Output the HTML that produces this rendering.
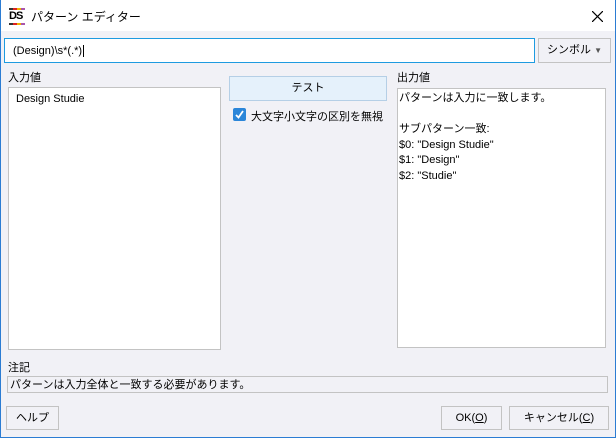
<!DOCTYPE html>
<html><head><meta charset="utf-8"><style>
*{box-sizing:border-box;margin:0;padding:0}
body{width:616px;height:438px;overflow:hidden;background:#f1f1f6;font-family:"Liberation Sans","Noto Sans CJK JP",sans-serif;font-size:11px;color:#000;position:relative}
.a{position:absolute}
.frame{left:0;top:0;width:616px;height:438px;border:1px solid #2b7cd3;border-top:none}
.title{left:0;top:0;width:616px;height:31px;background:#fff}
.box{background:#fff;border:1px solid #c3c3c3}
.btn{background:#f1f1f6;border:1px solid #c3c3c3;text-align:center;line-height:22px}
.stripe{height:2px;width:16px;background:linear-gradient(90deg,#333 0 25%,#d22 25% 50%,#f0b000 50% 75%,#a5a 75%)}
</style></head><body>
<div class="a title"></div>
<div class="a" style="left:9px;top:8px;width:16px">
<div class="stripe"></div>
<div style="font-weight:bold;font-size:11px;line-height:11px;letter-spacing:-1px;margin:1px 0">DS</div>
<div class="stripe"></div></div>
<div class="a" style="left:31px;top:8px;font-size:12px">パターン エディター</div>
<svg class="a" style="left:592px;top:11px" width="11" height="11"><path d="M0 0L11 11M11 0L0 11" stroke="#000" stroke-width="1.2"/></svg>
<div class="a box" style="left:4px;top:38px;width:531px;height:25px;border-color:#1e9be0;padding:6px 8px;font-size:11px">(Design)\s*(.*)<span style="border-left:1px solid #000;margin-left:1px"></span></div>
<div class="a btn" style="left:538px;top:38px;width:73px;height:25px">シンボル <span style="font-size:8px;color:#555">▼</span></div>
<div class="a" style="left:8px;top:69px">入力値</div>
<div class="a box" style="left:8px;top:87px;width:213px;height:263px;padding:5px 7px">Design Studie</div>
<div class="a btn" style="left:229px;top:76px;width:158px;height:25px;background:#e5f1fb;border-color:#b5cfe6">テスト</div>
<div class="a" style="left:233px;top:108px;width:13px;height:13px;background:#2b86d9;border-radius:2px"><svg width="13" height="13"><path d="M3 7L5.5 9.5L10 3" stroke="#fff" stroke-width="1.8" fill="none"/></svg></div>
<div class="a" style="left:251px;top:108px">大文字小文字の区別を無視</div>
<div class="a" style="left:397px;top:69px">出力値</div>
<div class="a box" style="left:397px;top:88px;width:209px;height:260px;padding:2px 1px;line-height:15.5px">パターンは入力に一致します。<br><br>サブパターン一致:<br>$0: "Design Studie"<br>$1: "Design"<br>$2: "Studie"</div>
<div class="a" style="left:8px;top:359px">注記</div>
<div class="a box" style="left:7px;top:376px;width:601px;height:17px;background:#f1f1f6;padding:1px 2px;line-height:14px">パターンは入力全体と一致する必要があります。</div>
<div class="a btn" style="left:6px;top:406px;width:53px;height:24px">ヘルプ</div>
<div class="a btn" style="left:441px;top:406px;width:61px;height:24px">OK(<u>O</u>)</div>
<div class="a btn" style="left:509px;top:406px;width:100px;height:24px">キャンセル(<u>C</u>)</div>
<div class="a frame"></div>
</body></html>
